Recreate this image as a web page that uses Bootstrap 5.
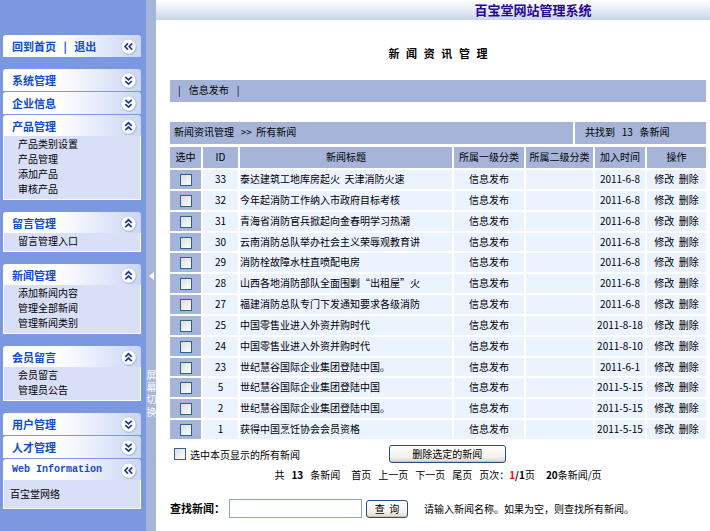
<!DOCTYPE html>
<html lang="zh-CN">
<head>
<meta charset="utf-8">
<meta name="viewport" content="width=device-width, initial-scale=1">
<title>百宝堂网站管理系统</title>
<link href="https://cdn.jsdelivr.net/npm/bootstrap@5.3.0/dist/css/bootstrap.min.css" rel="stylesheet">
<style>
body{font-family:"Noto Sans CJK SC",sans-serif;font-size:10px;line-height:15px;color:#000;background:#fff}
a{color:inherit;text-decoration:none}
.side{width:146px;background:#7b98e0;padding:35px 5px 22px 3px}
.group{margin-bottom:12px}
.head-btn{height:22px;padding:0 4px 0 9px;border:0;border-radius:3px 3px 0 0;background:linear-gradient(90deg,#fff 40%,#cad6f7);color:#0f4bcb;font-size:11px;font-weight:700;line-height:22px}
.head-btn + .head-btn,.sub + .head-btn{margin-top:1px}
.head-btn svg{width:17px;height:17px}
.latin{font-family:"Liberation Mono",monospace;font-size:10px}
.sub{background:#dadff8;border:solid #fff;border-width:0 1px 1px;margin-top:-1px;padding:0 0 3px 14px}
.sub-tall{padding:6px 0 7px 6px}
.splitter{width:10px;padding:272px 0 0;border:0;background:#a5b4d8;color:#fff;font-size:10px;line-height:10px}
.splitter svg{width:5px;height:8px;margin-bottom:90px}
.splitter span{writing-mode:vertical-rl}
.top{height:20px;background:linear-gradient(#fff,#e8edf7 45%,#c9d4ea);color:#2b0796;font-size:13px;font-weight:700;line-height:19px;padding-left:200px}
.content{padding:27px 4px 0 14px}
.page-title{font-family:"Liberation Mono","Noto Sans CJK SC",monospace;font-size:11px;font-weight:700;line-height:16px;margin:0 0 17px}
.bar{background:#a5b4d8;height:22px;line-height:19px}
.crumbs{gap:2px}
.found{width:131px;padding-left:10px}
.news{width:calc(100% + 4px);height:296px;margin:1px -2px 0;table-layout:fixed;border-collapse:separate;border-spacing:2px}
.news th,.news td{padding:0;text-align:center;vertical-align:top;font-weight:400;line-height:17px;white-space:nowrap}
.news thead th,.news td:first-child{background:#a5b4d8}
.news thead th{line-height:19px;height:21px}
.news td{background:#ebf3ff}
.news td:nth-child(3){text-align:left;overflow:hidden}
.c1{width:31px}.c2{width:35px}.c4{width:70px}.c5{width:67px}.c6{width:50px}.c7{width:59px}
.tick{appearance:none;display:block;width:12px;height:12px;border:1px solid #2a648e;background:linear-gradient(135deg,#dcdcd6,#fff);margin:0}
.tick:checked{background:#2a648e}
.news .tick{margin:4px auto 0}
.xp{border:1px solid #234f84;border-radius:3px;background:linear-gradient(#fff,#f2f1ea 70%,#d9d5c8);box-shadow:inset 0 -1px #c9c5b6;height:18px;padding:0;color:#000;line-height:14px}
.xp-wide{width:117px}
.xp-small{width:42px}
.search-box{width:133px;height:19px;border:1px solid #8ba5cd;padding:0 3px;font-size:10px}
.search-label{font-size:11px;font-weight:700}
.tools{margin-top:4px}
.pages{gap:7px;margin-top:4px}
.search{margin-top:17px}
.red{color:#f00}
</style>
<script src="https://cdn.jsdelivr.net/npm/bootstrap@5.3.0/dist/js/bootstrap.bundle.min.js" defer></script>
</head>
<body>
<svg class="d-none" aria-hidden="true">
<defs>
<symbol id="disc" viewBox="0 0 16 16"><circle cx="8.6" cy="8.8" r="7.2" fill="#a2aed0" opacity=".65"/><circle cx="8" cy="8" r="7" fill="#fff" stroke="#b5bfdc" stroke-width=".6"/></symbol>
<symbol id="down" viewBox="0 0 16 16"><use href="#disc"/><path d="M5 4.5 8 7.3l3-2.8M5 8.5l3 2.8 3-2.8" fill="none" stroke="#1c3c9c" stroke-width="1.6"/></symbol>
<symbol id="up" viewBox="0 0 16 16"><use href="#disc"/><path d="M5 7.3l3-2.8 3 2.8M5 11.3l3-2.8 3 2.8" fill="none" stroke="#1c3c9c" stroke-width="1.6"/></symbol>
<symbol id="left" viewBox="0 0 16 16"><use href="#disc"/><path d="M7.5 5 4.7 8l2.8 3M11.5 5 8.7 8l2.8 3" fill="none" stroke="#1c3c9c" stroke-width="1.6"/></symbol>
</defs>
</svg>
<div class="d-flex min-vh-100">
<nav class="side flex-shrink-0">
  <div class="group">
    <button class="head-btn w-100 d-flex align-items-center justify-content-between" type="button"><span>回到首页&nbsp;&nbsp; |&nbsp;&nbsp; 退出</span><svg><use href="#left"/></svg></button>
  </div>
  <div class="group">
    <button class="head-btn w-100 d-flex align-items-center justify-content-between" type="button">系统管理<svg><use href="#down"/></svg></button>
    <button class="head-btn w-100 d-flex align-items-center justify-content-between" type="button">企业信息<svg><use href="#down"/></svg></button>
    <button class="head-btn w-100 d-flex align-items-center justify-content-between" type="button">产品管理<svg><use href="#up"/></svg></button>
    <div class="sub d-flex flex-column"><a href="#">产品类别设置</a><a href="#">产品管理</a><a href="#">添加产品</a><a href="#">审核产品</a></div>
  </div>
  <div class="group">
    <button class="head-btn w-100 d-flex align-items-center justify-content-between" type="button">留言管理<svg><use href="#up"/></svg></button>
    <div class="sub d-flex flex-column"><a href="#">留言管理入口</a></div>
  </div>
  <div class="group">
    <button class="head-btn w-100 d-flex align-items-center justify-content-between" type="button">新闻管理<svg><use href="#up"/></svg></button>
    <div class="sub d-flex flex-column"><a href="#">添加新闻内容</a><a href="#">管理全部新闻</a><a href="#">管理新闻类别</a></div>
  </div>
  <div class="group">
    <button class="head-btn w-100 d-flex align-items-center justify-content-between" type="button">会员留言<svg><use href="#up"/></svg></button>
    <div class="sub d-flex flex-column"><a href="#">会员留言</a><a href="#">管理员公告</a></div>
  </div>
  <div>
    <button class="head-btn w-100 d-flex align-items-center justify-content-between" type="button">用户管理<svg><use href="#down"/></svg></button>
    <button class="head-btn w-100 d-flex align-items-center justify-content-between" type="button">人才管理<svg><use href="#down"/></svg></button>
    <button class="head-btn w-100 d-flex align-items-center justify-content-between" type="button"><span class="latin">Web Information</span><svg><use href="#left"/></svg></button>
    <div class="sub sub-tall"><a href="#">百宝堂网络</a></div>
  </div>
</nav>
<button class="splitter flex-shrink-0 d-flex flex-column align-items-center" type="button"><svg viewBox="0 0 5 8"><path d="M5 0v8L0 4z" fill="#fff"/></svg><span>屏 幕 切 换</span></button>
<main class="flex-grow-1">
  <header class="top text-center">百宝堂网站管理系统</header>
  <div class="content">
    <h1 class="page-title text-center">新 闻 资 讯 管 理</h1>
    <div class="bar d-flex px-2"><span>|</span><a class="px-2" href="#">信息发布</a><span>|</span></div>
    <div class="d-flex mt-3 pt-1 crumbs">
      <div class="bar flex-grow-1 ps-1">新闻资讯管理&nbsp;&nbsp; &gt;&gt;&nbsp; 所有新闻</div>
      <div class="bar found">共找到&nbsp;&nbsp; 13&nbsp;&nbsp; 条新闻</div>
    </div>
    <table class="news">
      <thead><tr><th class="c1">选中</th><th class="c2">ID</th><th>新闻标题</th><th class="c4">所属一级分类</th><th class="c5">所属二级分类</th><th class="c6">加入时间</th><th class="c7">操作</th></tr></thead>
      <tbody>
      <tr><td><input class="tick" type="checkbox" aria-label="33"></td><td>33</td><td>泰达建筑工地库房起火&nbsp; 天津消防火速</td><td>信息发布</td><td></td><td>2011-6-8</td><td><a href="#">修改</a>&nbsp; <a href="#">删除</a></td></tr>
      <tr><td><input class="tick" type="checkbox" aria-label="32"></td><td>32</td><td>今年起消防工作纳入市政府目标考核</td><td>信息发布</td><td></td><td>2011-6-8</td><td><a href="#">修改</a>&nbsp; <a href="#">删除</a></td></tr>
      <tr><td><input class="tick" type="checkbox" aria-label="31"></td><td>31</td><td>青海省消防官兵掀起向金春明学习热潮</td><td>信息发布</td><td></td><td>2011-6-8</td><td><a href="#">修改</a>&nbsp; <a href="#">删除</a></td></tr>
      <tr><td><input class="tick" type="checkbox" aria-label="30"></td><td>30</td><td>云南消防总队举办社会主义荣辱观教育讲</td><td>信息发布</td><td></td><td>2011-6-8</td><td><a href="#">修改</a>&nbsp; <a href="#">删除</a></td></tr>
      <tr><td><input class="tick" type="checkbox" aria-label="29"></td><td>29</td><td>消防栓故障水柱直喷配电房</td><td>信息发布</td><td></td><td>2011-6-8</td><td><a href="#">修改</a>&nbsp; <a href="#">删除</a></td></tr>
      <tr><td><input class="tick" type="checkbox" aria-label="28"></td><td>28</td><td>山西各地消防部队全面围剿“出租屋”火</td><td>信息发布</td><td></td><td>2011-6-8</td><td><a href="#">修改</a>&nbsp; <a href="#">删除</a></td></tr>
      <tr><td><input class="tick" type="checkbox" aria-label="27"></td><td>27</td><td>福建消防总队专门下发通知要求各级消防</td><td>信息发布</td><td></td><td>2011-6-8</td><td><a href="#">修改</a>&nbsp; <a href="#">删除</a></td></tr>
      <tr><td><input class="tick" type="checkbox" aria-label="25"></td><td>25</td><td>中国零售业进入外资并购时代</td><td>信息发布</td><td></td><td>2011-8-18</td><td><a href="#">修改</a>&nbsp; <a href="#">删除</a></td></tr>
      <tr><td><input class="tick" type="checkbox" aria-label="24"></td><td>24</td><td>中国零售业进入外资并购时代</td><td>信息发布</td><td></td><td>2011-8-10</td><td><a href="#">修改</a>&nbsp; <a href="#">删除</a></td></tr>
      <tr><td><input class="tick" type="checkbox" aria-label="23"></td><td>23</td><td>世纪慧谷国际企业集团登陆中国。</td><td>信息发布</td><td></td><td>2011-6-1</td><td><a href="#">修改</a>&nbsp; <a href="#">删除</a></td></tr>
      <tr><td><input class="tick" type="checkbox" aria-label="5"></td><td>5</td><td>世纪慧谷国际企业集团登陆中国</td><td>信息发布</td><td></td><td>2011-5-15</td><td><a href="#">修改</a>&nbsp; <a href="#">删除</a></td></tr>
      <tr><td><input class="tick" type="checkbox" aria-label="2"></td><td>2</td><td>世纪慧谷国际企业集团登陆中国。</td><td>信息发布</td><td></td><td>2011-5-15</td><td><a href="#">修改</a>&nbsp; <a href="#">删除</a></td></tr>
      <tr><td><input class="tick" type="checkbox" aria-label="1"></td><td>1</td><td>获得中国烹饪协会会员资格</td><td>信息发布</td><td></td><td>2011-5-15</td><td><a href="#">修改</a>&nbsp; <a href="#">删除</a></td></tr>
      </tbody>
    </table>
    <div class="row g-0 align-items-center tools">
      <div class="col-4 d-flex align-items-center gap-1"><input class="tick ms-1" type="checkbox" id="all"><label for="all">选中本页显示的所有新闻</label></div>
      <div class="col-5 ps-4"><button class="xp xp-wide ms-3" type="button">删除选定的新闻</button></div>
    </div>
    <div class="pages d-flex justify-content-center">
      <span>共</span><b>13</b><span class="me-1">条新闻</span><a href="#">首页</a><a href="#">上一页</a><a href="#">下一页</a><a href="#">尾页</a><span class="me-1">页次：<b class="red">1</b><b>/1</b>页</span><span><b>20</b>条新闻/页</span>
    </div>
    <form class="search d-flex align-items-center">
      <label class="search-label" for="q">查找新闻：</label>
      <input class="search-box ms-1" id="q" type="text">
      <button class="xp xp-small ms-1" type="button">查&nbsp; 询</button>
      <span class="ms-3">请输入新闻名称。如果为空，则查找所有新闻。</span>
    </form>
  </div>
</main>
</div>
</body>
</html>
